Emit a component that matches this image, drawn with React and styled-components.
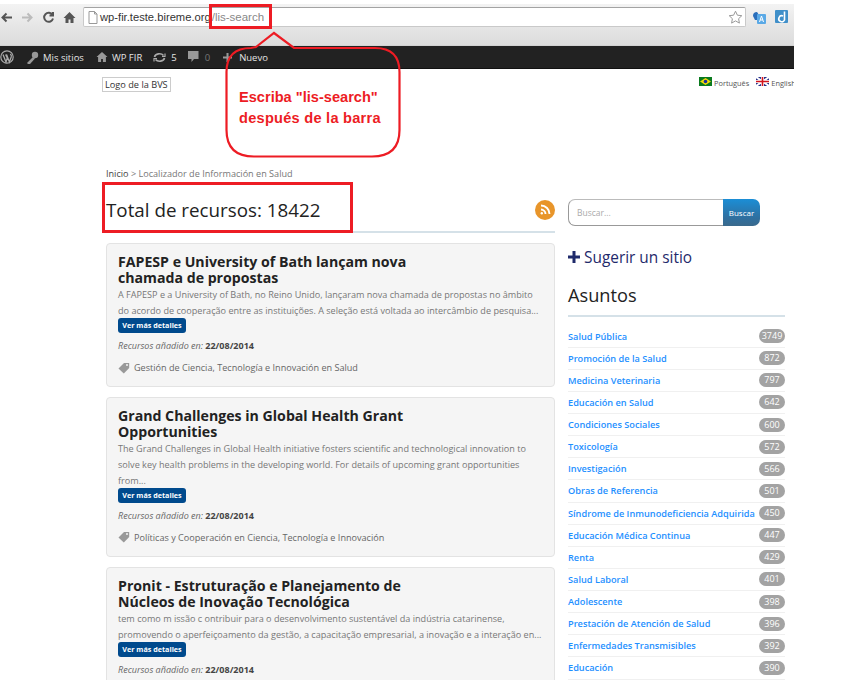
import React from "react";
import styled, { createGlobalStyle } from "styled-components";

const Global = createGlobalStyle`
  html, body { margin: 0; padding: 0; background: #fff; }
  body { font-family: "Open Sans", "Liberation Sans", sans-serif; overflow: hidden; }
  * { box-sizing: border-box; }
`;

const Shot = styled.div`
  position: relative;
  width: 794px;
  height: 680px;
  overflow: hidden;
  background: #fff;
`;
const BrowserBar = styled.div`
  height: 46px;
  padding-top: 4px;
  background: linear-gradient(#fff 0, #fff 4px, #f3f3f3 4px, #e6e6e6 26px, #dcdcdc 45px, #c8c8c8 46px);
`;
const ToolRow = styled.div`
  display: flex;
  align-items: center;
  height: 22px;
  margin-top: 2px;
`;
const NavGroup = styled.div`
  display: flex;
  align-items: center;
  gap: 8px;
  width: 83px;
  flex: none;
`;
const Omnibox = styled.div`
  display: flex;
  align-items: center;
  width: 663px;
  height: 20px;
  flex: none;
  background: #fff;
  border: 1px solid #c9c9c9;
  border-top-color: #a3a3a3;
  border-radius: 2px;
  padding: 0 2px 0 4px;
  font-family: "Liberation Sans", Arial, sans-serif;
  font-size: 11.2px;
`;
const Host = styled.span`
  margin-left: 2px;
  color: #333;
`;
const UrlPath = styled.span`
  margin-left: 1px;
  font-size: 11.5px;
  color: #888;
`;
const Star = styled.span`
  margin-left: auto;
  display: flex;
`;
const Extensions = styled.div`
  display: flex;
  align-items: center;
  gap: 9px;
  margin-left: 6px;
`;
const AdminBar = styled.div`
  display: flex;
  align-items: center;
  height: 23px;
  background: #222;
  border-bottom: 1px solid #111;
  color: #eee;
  font-size: 9.5px;
  white-space: nowrap;
`;
const AdminItem = styled.span`
  display: flex;
  align-items: center;
  gap: ${p => p.$gap || 5}px;
  margin-left: ${p => p.$ml || 0}px;
  color: ${p => p.$dim ? "#777" : "#e4e4e4"};
`;
const Masthead = styled.div`
  display: flex;
  justify-content: space-between;
  align-items: flex-start;
  height: 98px;
  padding: 8px 0 0 102px;
`;
const LogoBox = styled.div`
  border: 1px solid #ccc;
  padding: 0 2px;
  height: 15px;
  line-height: 13px;
  font-size: 9.2px;
  color: #333;
  white-space: nowrap;
`;
const Langs = styled.div`
  display: flex;
  width: 95px;
  flex: none;
  gap: 7px;
  font-size: 7.4px;
  color: #555;
  white-space: nowrap;
`;
const Lang = styled.span`
  display: flex;
  align-items: flex-start;
  gap: 2px;
  line-height: 12px;
`;
const Columns = styled.div`
  display: flex;
  padding-left: 106px;
  gap: 13px;
`;
const Main = styled.main`
  width: 449px;
  flex: none;
`;
const Crumbs = styled.div`
  height: 13px;
  line-height: 13px;
  font-size: 9.1px;
  color: #777;
  & b { font-weight: 400; color: #444; }
`;
const TitleRow = styled.div`
  display: flex;
  justify-content: space-between;
  align-items: center;
  height: 53px;
  padding-top: 9px;
  border-bottom: 2px solid #d5e1e8;
`;
const Title = styled.h1`
  margin: 0;
  font-size: 18.8px;
  font-weight: 400;
  color: #222;
`;
const Rss = styled.span`
  display: flex;
  align-items: center;
  justify-content: center;
  width: 20px;
  height: 20px;
  border-radius: 50%;
  background: #e8952a;
`;
const Cards = styled.div`
  display: flex;
  flex-direction: column;
  gap: 10px;
  margin-top: 10px;
`;
const Card = styled.article`
  background: #f5f5f5;
  border: 1px solid #e3e3e3;
  border-radius: 4px;
  padding: 10px 10px 11px 11px;
`;
const CardTitle = styled.h2`
  margin: 0 0 1px;
  width: 310px;
  font-size: 14.15px;
  line-height: 16px;
  font-weight: 700;
  color: #222;
`;
const Excerpt = styled.p`
  margin: 0;
  font-size: 9.1px;
  line-height: 15.7px;
  color: #777;
`;
const More = styled.span`
  display: block;
  width: 68px;
  height: 15px;
  line-height: 14px;
  text-align: center;
  border-radius: 3px;
  background: #004a8d;
  color: #fff;
  font-size: 7.2px;
  font-weight: 700;
`;
const Added = styled.div`
  margin-top: 4.7px;
  font-size: 9px;
  line-height: 15px;
  color: #666;
  font-style: italic;
  & b { font-style: normal; color: #444; }
`;
const Tags = styled.div`
  display: flex;
  align-items: center;
  gap: 4px;
  margin-top: 7px;
  font-size: 9.1px;
  line-height: 15px;
  color: #666;
`;
const Side = styled.aside`
  width: 217px;
  flex: none;
  padding-top: 32px;
`;
const Search = styled.div`
  display: flex;
  width: 192px;
  height: 27px;
`;
const SearchInput = styled.div`
  flex: 1;
  border: 1px solid #999;
  border-right: 0;
  border-top-color: #bbb;
  border-radius: 7px 0 0 7px;
  padding-left: 8px;
  line-height: 25px;
  font-size: 8.5px;
  color: #aaa;
`;
const SearchBtn = styled.div`
  width: 37px;
  border-radius: 0 7px 7px 0;
  background: linear-gradient(#1b8ed6, #2f6f9f 70%, #3b6a8c);
  color: #fff;
  font-size: 8px;
  line-height: 27px;
  text-align: center;
`;
const Suggest = styled.div`
  display: flex;
  align-items: center;
  gap: 4px;
  margin-top: 20px;
  height: 22px;
  font-size: 15.4px;
  color: #1f2a6b;
`;
const SideTitle = styled.h3`
  margin: 12px 0 0;
  height: 37px;
  line-height: 30px;
  border-bottom: 2px solid #d5e1e8;
  font-size: 18.2px;
  font-weight: 400;
  color: #222;
`;
const Topics = styled.ul`
  list-style: none;
  margin: 8.5px 0 0;
  padding: 0;
`;
const Topic = styled.li`
  display: flex;
  justify-content: space-between;
  align-items: center;
  height: 22.13px;
  border-bottom: 1px solid #f0f0f0;
  font-size: 9.2px;
  font-weight: 600;
  color: #1e90ff;
  white-space: nowrap;
`;
const Count = styled.span`
  flex: none;
  width: 26px;
  height: 14px;
  line-height: 14px;
  border-radius: 7px;
  background: #a3a3a3;
  color: #fff;
  text-align: center;
  font-size: 9px;
  font-weight: 400;
`;
const Note = styled.div`
  position: absolute;
  left: 239px;
  top: 87px;
  color: #ed1c24;
  font: 700 14.6px/21px "Liberation Sans", Arial, sans-serif;
  white-space: nowrap;
`;
const NoteWide = styled.span`
  letter-spacing: 0.25px;
`;
const Overlay = styled.svg`
  position: absolute;
  left: 0;
  top: 0;
  pointer-events: none;
`;

const NavIcon = ({ d, color = "#555", sw = 2 }) => (
  <svg width="13" height="13" viewBox="0 0 13 13" fill="none" stroke={color} strokeWidth={sw}><path d={d} /></svg>
);
const WpLogo = () => (
  <svg width="14" height="14" viewBox="0 0 14 14">
    <circle cx="7" cy="7" r="6.2" fill="none" stroke="#aaa" strokeWidth="1.2" />
    <path d="M3 4.5 6 12 7.3 8 5.6 4.5M6.5 4.5 9.4 12 11.2 7Q11.8 5 10.2 4" fill="none" stroke="#aaa" strokeWidth="1.3" />
  </svg>
);
const TagIcon = () => (
  <svg width="12" height="12" viewBox="0 0 12 12"><path d="M0.5 6.5 6 1h5.2v5L5.8 11.4z" fill="#999" /><circle cx="9" cy="3" r="1" fill="#f5f5f5" /></svg>
);

const topics = [
  ["Salud Pública", 3749], ["Promoción de la Salud", 872], ["Medicina Veterinaria", 797],
  ["Educación en Salud", 642], ["Condiciones Sociales", 600], ["Toxicología", 572],
  ["Investigación", 566], ["Obras de Referencia", 501], ["Síndrome de Inmunodeficiencia Adquirida", 450],
  ["Educación Médica Continua", 447], ["Renta", 429], ["Salud Laboral", 401], ["Adolescente", 398],
  ["Prestación de Atención de Salud", 396], ["Enfermedades Transmisibles", 392], ["Educación", 390],
];

const cards = [
  {
    title: "FAPESP e University of Bath lançam nova chamada de propostas",
    text: "A FAPESP e a University of Bath, no Reino Unido, lançaram nova chamada de propostas no âmbito do acordo de cooperação entre as instituições. A seleção está voltada ao intercâmbio de pesquisa...",
    tags: "Gestión de Ciencia, Tecnología e Innovación en Salud",
  },
  {
    title: "Grand Challenges in Global Health Grant Opportunities",
    text: "The Grand Challenges in Global Health initiative fosters scientific and technological innovation to solve key health problems in the developing world. For details of upcoming grant opportunities from...",
    tags: "Políticas y Cooperación en Ciencia, Tecnología e Innovación",
  },
  {
    title: "Pronit - Estruturação e Planejamento de Núcleos de Inovação Tecnológica",
    text: "tem como m issão c ontribuir para o desenvolvimento sustentável da indústria catarinense, promovendo o aperfeiçoamento da gestão, a capacitação empresarial, a inovação e a interação en...",
  },
];

export default function App() {
  return (
    <Shot>
      <Global />
      <BrowserBar>
        <ToolRow>
          <NavGroup>
            <NavIcon d="M12 6.5H3M6.5 2.5l-4 4 4 4" />
            <NavIcon color="#bbb" d="M1 6.5h9M6.5 2.5l4 4-4 4" />
            <NavIcon d="M10.5 4A4.5 4.5 0 1 0 11 7.5M11 1v3.5H7.5" />
            <svg width="13" height="13" viewBox="0 0 13 13"><path d="M6.5 1 0.5 7h2v5h3V8.5h2V12h3V7h2z" fill="#555" /></svg>
          </NavGroup>
          <Omnibox>
            <svg width="10" height="13" viewBox="0 0 10 13" fill="#fff" stroke="#999"><path d="M1 .5h5.5L9 3v9.5H1zM6.5.5V3H9" /></svg>
            <Host>wp-fir.teste.bireme.org</Host>
            <UrlPath>/lis-search</UrlPath>
            <Star>
              <svg width="15" height="15" viewBox="0 0 15 15" fill="#fff" stroke="#999"><path d="M7.5 1.2l1.9 4 4.4.5-3.2 3 .8 4.4-3.9-2.2-3.9 2.2.8-4.4-3.2-3 4.4-.5z" /></svg>
            </Star>
          </Omnibox>
          <Extensions>
            <svg width="14" height="14" viewBox="0 0 14 14">
              <path d="M1 6a4 4 0 0 1 4-4l2 3v5H3z" fill="#2a6ebb" />
              <rect x="5" y="4" width="9" height="10" rx="1" fill="#5aa9e6" />
              <path d="M7.5 12 9.5 6l2 6M8.3 10h2.4" stroke="#fff" fill="none" />
            </svg>
            <svg width="14" height="14" viewBox="0 0 14 14">
              <rect width="13" height="13" rx="1" fill="#3f8fc9" />
              <path d="M9.5 1.5V10A3 3 0 1 1 8 6" fill="none" stroke="#fff" strokeWidth="1.6" />
            </svg>
          </Extensions>
        </ToolRow>
      </BrowserBar>
      <AdminBar>
        <WpLogo />
        <AdminItem $ml={12} $gap={4}>
          <svg width="13" height="13" viewBox="0 0 13 13"><circle cx="9" cy="4" r="3.2" fill="#999" /><path d="M7 6 1.5 11.5V13h2.5l5-5.5z" fill="#999" /></svg>
          Mis sitios
        </AdminItem>
        <AdminItem $ml={12} $gap={4}>
          <svg width="12" height="12" viewBox="0 0 12 12"><path d="M6 1 .5 6h1.6v5h3V8h1.8v3h3V6h1.6z" fill="#999" /></svg>
          WP FIR
        </AdminItem>
        <AdminItem $ml={11} $gap={5}>
          <svg width="13" height="13" viewBox="0 0 13 13" fill="none" stroke="#aaa" strokeWidth="1.7"><path d="M1.5 6A5 4 0 0 1 10.5 4.5M11.5 7A5 4 0 0 1 2.5 8.5" /><path d="M9 5.5h3V2.5M4 7.5H1v3" strokeWidth="1.2" /></svg>
          5
        </AdminItem>
        <AdminItem $ml={11} $gap={6} $dim>
          <svg width="11" height="12" viewBox="0 0 11 12"><path d="M0 0h10.5v8H6L3.5 11V8H0z" fill="#999" /></svg>
          0
        </AdminItem>
        <AdminItem $ml={13} $gap={7}>
          <svg width="9" height="9" viewBox="0 0 9 9"><path d="M3.5 0h2v3.5H9v2H5.5V9h-2V5.5H0v-2h3.5z" fill="#999" /></svg>
          Nuevo
        </AdminItem>
      </AdminBar>
      <Masthead>
        <LogoBox>Logo de la BVS</LogoBox>
        <Langs>
          <Lang>
            <svg width="13" height="9" viewBox="0 0 13 9"><rect width="13" height="9" fill="#0a7a1e" /><path d="M6.5 1 12 4.5 6.5 8 1 4.5z" fill="#f5d90a" /><circle cx="6.5" cy="4.5" r="1.8" fill="#1a2f9c" /></svg>
            Português
          </Lang>
          <Lang>
            <svg width="13" height="9" viewBox="0 0 13 9"><rect width="13" height="9" fill="#26308a" /><path d="M0 0 13 9M13 0 0 9" stroke="#fff" strokeWidth="2" /><path d="M6.5 0v9M0 4.5h13" stroke="#fff" strokeWidth="3" /><path d="M6.5 0v9M0 4.5h13" stroke="#d2141c" strokeWidth="1.6" /></svg>
            English
          </Lang>
        </Langs>
      </Masthead>
      <Columns>
        <Main>
          <Crumbs><b>Inicio</b> &gt; Localizador de Información en Salud</Crumbs>
          <TitleRow>
            <Title>Total de recursos: 18422</Title>
            <Rss>
              <svg width="12" height="12" viewBox="0 0 12 12" fill="none" stroke="#fff" strokeWidth="1.9"><path d="M2 1.5a8.5 8.5 0 0 1 8.5 8.5M2 5.5A4.5 4.5 0 0 1 6.5 10" /><circle cx="2.8" cy="9.3" r="1.2" fill="#fff" stroke="none" /></svg>
            </Rss>
          </TitleRow>
          <Cards>
            {cards.map(c => (
              <Card key={c.title}>
                <CardTitle>{c.title}</CardTitle>
                <Excerpt>{c.text}</Excerpt>
                <More>Ver más detalles</More>
                <Added>Recursos añadido en: <b>22/08/2014</b></Added>
                {c.tags && <Tags><TagIcon />{c.tags}</Tags>}
              </Card>
            ))}
          </Cards>
        </Main>
        <Side>
          <Search>
            <SearchInput>Buscar...</SearchInput>
            <SearchBtn>Buscar</SearchBtn>
          </Search>
          <Suggest>
            <svg width="12" height="12" viewBox="0 0 12 12"><path d="M4.5 0h3v4.5H12v3H7.5V12h-3V7.5H0v-3h4.5z" fill="#1f2a6b" /></svg>
            Sugerir un sitio
          </Suggest>
          <SideTitle>Asuntos</SideTitle>
          <Topics>
            {topics.map(([name, n]) => (
              <Topic key={name}>{name}<Count>{n}</Count></Topic>
            ))}
          </Topics>
        </Side>
      </Columns>
      <Overlay width="794" height="680" fill="none" stroke="#ed1c24">
        <rect x="210.5" y="5.5" width="60" height="22" strokeWidth="3" />
        <rect x="103.5" y="183.5" width="248" height="48" strokeWidth="3" />
        <path d="M256 47 274 33 294 48H375Q399.5 48 399.5 72V130Q399.5 156.5 372 156.5H254Q226.5 156.5 226.5 130V72Q226.5 48 251 48Z" strokeWidth="2.2" />
      </Overlay>
      <Note>Escriba "lis-search"<br /><NoteWide>después de la barra</NoteWide></Note>
    </Shot>
  );
}
